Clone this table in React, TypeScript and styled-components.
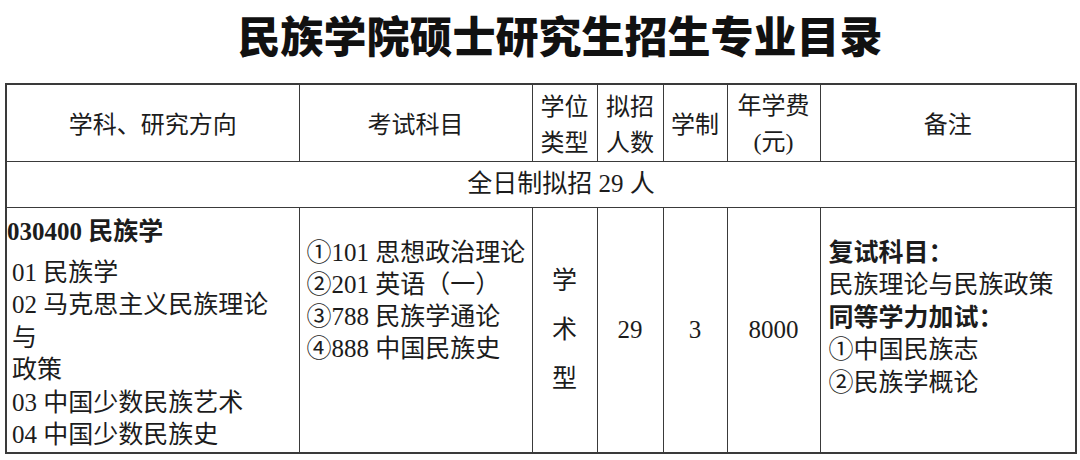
import styled, { createGlobalStyle } from 'styled-components';

const GlobalStyle = createGlobalStyle`
  html, body {
    margin: 0;
    padding: 0;
    background: #ffffff;
  }
  body {
    width: 1080px;
    height: 460px;
    overflow: hidden;
    color: #1c1c1c;
    font-family: "Liberation Serif", "Noto Sans CJK SC", serif;
  }
`;

const serif = `"Liberation Serif", "Noto Sans CJK SC", serif`;
const sans = `"Noto Sans CJK SC", "Liberation Sans", sans-serif`;

const Page = styled.div`
  width: 1080px;
  height: 460px;
  display: flex;
  flex-direction: column;
`;

const Title = styled.h1`
  margin: 0 0 14px;
  padding-left: 40px;
  height: 69px;
  line-height: 69px;
  text-align: center;
  font-family: ${sans};
  font-size: 43px;
  font-weight: 900;
  color: #111;
`;

const Table = styled.table`
  margin-left: 5px;
  width: 1070px;
  border-collapse: collapse;
  table-layout: fixed;
  border: 2px solid #3a3a3a;

  td,
  th {
    border: 1.5px solid #3a3a3a;
    padding: 0;
  }
`;

const HeadRow = styled.tr`
  height: 77px;
`;

const HeadCell = styled.th`
  font-family: ${sans};
  font-size: 24px;
  font-weight: 400;
  line-height: 36px;
  text-align: center;
  vertical-align: middle;
  color: #1c1c1c;
`;

const Paren = styled.span`
  font-family: ${serif};
`;

const GroupRow = styled.tr`
  height: 46px;
`;

const GroupCell = styled.td`
  font-family: ${serif};
  font-size: 25px;
  line-height: 32px;
  text-align: center;
  vertical-align: middle;
  padding-left: 40px !important;
`;

const BodyRow = styled.tr`
  height: 244px;
`;

const TopCell = styled.td<{ $top: number; $left: number; $lh: number }>`
  vertical-align: top;
  padding: ${(p) => p.$top}px 2px 0 ${(p) => p.$left}px !important;
  font-family: ${serif};
  font-size: 25px;
  line-height: ${(p) => p.$lh}px;
  white-space: nowrap;
`;

const MidCell = styled.td<{ $lh?: number }>`
  text-align: center;
  vertical-align: middle;
  font-family: ${serif};
  font-size: 25px;
  line-height: ${(p) => p.$lh ?? 32}px;
`;

const Line = styled.div<{ $indent?: number; $bold?: boolean }>`
  padding-left: ${(p) => p.$indent ?? 0}px;
  font-weight: ${(p) => (p.$bold ? 700 : 400)};
`;

const MajorLine = styled.div`
  font-weight: 700;
  line-height: 33px;
  margin-bottom: 9px;
`;

const majors = [
  '01 民族学',
  '02 马克思主义民族理论',
  '与',
  '政策',
  '03 中国少数民族艺术',
  '04 中国少数民族史',
];

const exams = ['①101 思想政治理论', '②201 英语（一）', '③788 民族学通论', '④888 中国民族史'];

const notes: { text: string; bold?: boolean }[] = [
  { text: '复试科目：', bold: true },
  { text: '民族理论与民族政策' },
  { text: '同等学力加试：', bold: true },
  { text: '①中国民族志' },
  { text: '②民族学概论' },
];

export default function App() {
  return (
    <>
      <GlobalStyle />
      <Page>
        <Title>民族学院硕士研究生招生专业目录</Title>
        <Table>
          <colgroup>
            <col style={{ width: 293 }} />
            <col style={{ width: 233 }} />
            <col style={{ width: 65 }} />
            <col style={{ width: 66 }} />
            <col style={{ width: 64 }} />
            <col style={{ width: 93 }} />
            <col style={{ width: 256 }} />
          </colgroup>
          <tbody>
            <HeadRow>
              <HeadCell>学科、研究方向</HeadCell>
              <HeadCell>考试科目</HeadCell>
              <HeadCell>
                学位
                <br />
                类型
              </HeadCell>
              <HeadCell>
                拟招
                <br />
                人数
              </HeadCell>
              <HeadCell>学制</HeadCell>
              <HeadCell>
                年学费
                <br />
                <Paren>(</Paren>元<Paren>)</Paren>
              </HeadCell>
              <HeadCell>备注</HeadCell>
            </HeadRow>
            <GroupRow>
              <GroupCell colSpan={7}>全日制拟招 29 人</GroupCell>
            </GroupRow>
            <BodyRow>
              <TopCell $top={7} $left={0} $lh={32.5}>
                <MajorLine>030400 民族学</MajorLine>
                {majors.map((m) => (
                  <Line key={m} $indent={5}>
                    {m}
                  </Line>
                ))}
              </TopCell>
              <TopCell $top={29} $left={7} $lh={32}>
                {exams.map((e) => (
                  <Line key={e}>{e}</Line>
                ))}
              </TopCell>
              <MidCell $lh={49}>
                学<br />术<br />型
              </MidCell>
              <MidCell>29</MidCell>
              <MidCell>3</MidCell>
              <MidCell>8000</MidCell>
              <TopCell $top={29} $left={8} $lh={32.5}>
                {notes.map((n) => (
                  <Line key={n.text} $bold={n.bold}>
                    {n.text}
                  </Line>
                ))}
              </TopCell>
            </BodyRow>
          </tbody>
        </Table>
      </Page>
    </>
  );
}
